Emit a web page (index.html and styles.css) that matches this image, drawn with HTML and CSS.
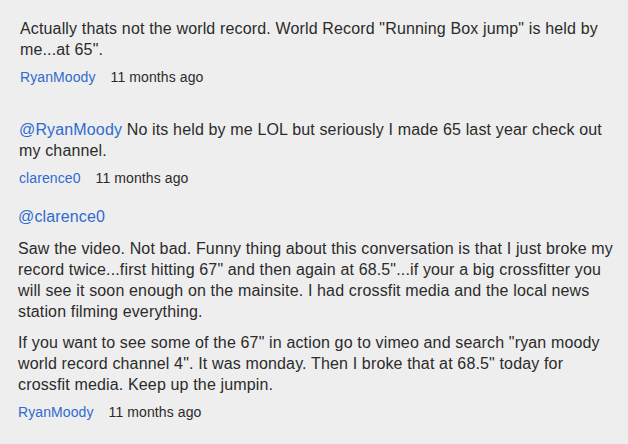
FILE: index.html
```html
<!DOCTYPE html>
<html lang="en">
<head>
  <meta charset="UTF-8" />
  <title>Comments</title>
  <link rel="stylesheet" href="styles.css">
</head>
<body>

  <div class="comments">
    <!-- comment 1 -->
    <div class="comment">
      <p class="text">Actually thats not the world record. World Record "Running Box jump" is held by me...at 65".</p>
      <div class="meta"><a href="#" class="author">RyanMoody</a><span class="time">11 months ago</span></div>
    </div>

    <!-- comment 2 -->
    <div class="comment second">
      <p class="text"><a href="#" class="mention">@RyanMoody</a> No its held by me LOL but seriously I made 65 last year check out my channel.</p>
      <div class="meta"><a href="#" class="author">clarence0</a><span class="time">11 months ago</span></div>
    </div>

    <!-- comment 3 -->
    <div class="comment third">
      <p class="reply-to"><a href="#" class="mention">@clarence0</a></p>
      <p class="text">Saw the video. Not bad. Funny thing about this conversation is that I just broke my record twice...first hitting 67" and then again at 68.5"...if your a big crossfitter you will see it soon enough on the mainsite. I had crossfit media and the local news station filming everything.</p>
      <p class="text">If you want to see some of the 67" in action go to vimeo and search "ryan moody world record channel 4". It was monday. Then I broke that at 68.5" today for crossfit media. Keep up the jumpin.</p>
      <div class="meta"><a href="#" class="author">RyanMoody</a><span class="time">11 months ago</span></div>
    </div>
  </div>

</body>
</html>
```

FILE: styles.css
```css
body {
  margin: 0;
  padding: 0;
  background-color: #eeeeee;
  font-family: 'Liberation Sans', Arial, sans-serif;
  color: #2b2b2b;
}

.comments {
  width: 596px;
  padding: 18px 0 0 20px;
}

.comment {
  margin-bottom: 33px;
}

.comment.second {
  margin-left: -1px;
  margin-bottom: 19px;
}

.comment.third {
  margin-left: -2px;
}

.text,
.reply-to {
  margin: 0;
  font-size: 16px;
  line-height: 21px;
  letter-spacing: 0.15px;
}

.reply-to {
  margin-bottom: 11px;
}

.text + .text {
  margin-top: 10px;
}

.meta {
  margin-top: 8px;
  font-size: 14px;
  line-height: 18px;
  letter-spacing: 0.1px;
}

a {
  color: #2f6bcf;
  text-decoration: none;
}

.time {
  margin-left: 15px;
}
```
